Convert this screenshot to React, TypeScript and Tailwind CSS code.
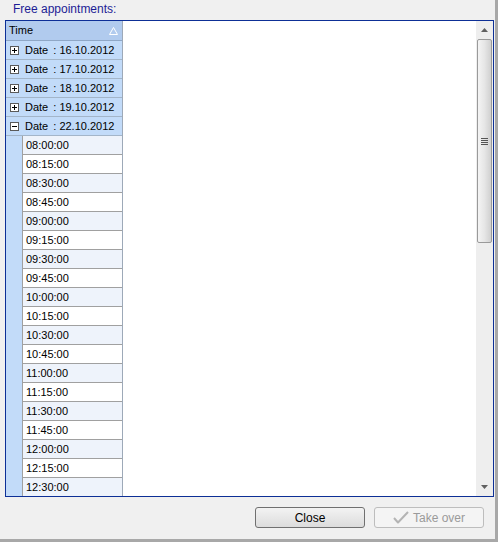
import React from 'react';

const dates = ['16.10.2012', '17.10.2012', '18.10.2012', '19.10.2012'];
const openDate = '22.10.2012';

const times = [
  '08:00:00', '08:15:00', '08:30:00', '08:45:00', '09:00:00', '09:15:00', '09:30:00',
  '09:45:00', '10:00:00', '10:15:00', '10:30:00', '10:45:00', '11:00:00', '11:15:00',
  '11:30:00', '11:45:00', '12:00:00', '12:15:00', '12:30:00',
];

const ExpandBox: React.FC<{ open?: boolean }> = ({ open }) => (
  <svg width="9" height="9" viewBox="0 0 9 9" className="shrink-0">
    <rect x="0.5" y="0.5" width="8" height="8" fill="#ffffff" stroke="#5a5a5a" />
    <line x1="2" y1="4.5" x2="7" y2="4.5" stroke="#000" />
    {!open && <line x1="4.5" y1="2" x2="4.5" y2="7" stroke="#000" />}
  </svg>
);

const GroupRow: React.FC<{ date: string; open?: boolean }> = ({ date, open }) => (
  <div className="h-[19px] shrink-0 flex items-center gap-[6px] pl-[4px] bg-[#c2dbf9] border-b border-[#a3b5c9]">
    <ExpandBox open={open} />
    <span className="whitespace-nowrap">
      Date<span className="ml-[5px]">: {date}</span>
    </span>
  </div>
);

const ScrollBar: React.FC = () => (
  <div className="w-[17px] h-full flex flex-col bg-[#eeeeee]">
    <div className="h-[18px] shrink-0 flex items-center justify-center">
      <svg width="7" height="4" viewBox="0 0 7 4">
        <polygon points="0,4 3.5,0 7,4" fill="#606060" />
      </svg>
    </div>
    <div className="mx-[1px] h-[204px] shrink-0 border border-[#9a9a9a] rounded-[2px] bg-gradient-to-r from-[#f4f4f4] via-[#e6e6e6] to-[#d0d0d0] flex items-center justify-center">
      <div className="flex flex-col gap-[1px]">
        <div className="w-[7px] h-[1px] bg-[#555]" />
        <div className="w-[7px] h-[1px] bg-[#555]" />
        <div className="w-[7px] h-[1px] bg-[#555]" />
        <div className="w-[7px] h-[1px] bg-[#555]" />
      </div>
    </div>
    <div className="flex-1" />
    <div className="h-[18px] shrink-0 flex items-center justify-center">
      <svg width="7" height="4" viewBox="0 0 7 4">
        <polygon points="0,0 3.5,4 7,0" fill="#606060" />
      </svg>
    </div>
  </div>
);

export default function App() {
  return (
    <div
      className="w-[498px] h-[542px] bg-[#f0f0f0] border-r-[3px] border-b-[3px] border-[#a8a8a8] flex flex-col text-[11px] text-black overflow-hidden"
      style={{ fontFamily: '"Liberation Sans", Arial, sans-serif' }}
    >
      <div className="h-[20px] shrink-0 pl-[13px] pt-[1px] text-[12px] text-[#1d1d95] leading-[16px]">
        Free appointments:
      </div>

      <div className="ml-[5px] w-[489px] h-[477px] shrink-0 border border-[#0d2f96] bg-white flex">
        {/* tree column */}
        <div className="w-[117px] h-full flex flex-col overflow-hidden border-r border-[#9da9b8] bg-[#c2dbf9]">
          <div className="h-[20px] shrink-0 flex items-center justify-between pl-[3px] pr-[4px] bg-[#b1cbee] border-b border-[#8fa7c6]">
            <span>Time</span>
            <svg width="9" height="8" viewBox="0 0 9 8">
              <polygon points="0.5,7.5 4.5,0.5 8.5,7.5" fill="none" stroke="#ffffff" />
            </svg>
          </div>
          {dates.map((d) => (
            <GroupRow key={d} date={d} />
          ))}
          <GroupRow date={openDate} open />
          <div className="flex flex-col pl-[16px]">
            {times.map((t, i) => (
              <div
                key={t}
                className={`h-[19px] shrink-0 flex items-center pl-[3px] border-l border-b border-[#a0a0a0] ${
                  i % 2 === 0 ? 'bg-[#eef3fb]' : 'bg-white'
                }`}
              >
                {t}
              </div>
            ))}
          </div>
        </div>
        <div className="flex-1" />
        <ScrollBar />
      </div>

      <div className="flex justify-end gap-[9px] pr-[11px] pt-[10px]">
        <button className="w-[110px] h-[21px] rounded-[3px] border border-[#707070] bg-gradient-to-b from-[#f3f3f3] to-[#dcdcdc] text-[12px]">
          Close
        </button>
        <button
          disabled
          className="w-[110px] h-[21px] rounded-[3px] border border-[#bdbdbd] bg-[#f4f4f4] text-[12px] text-[#9a9a9a] flex items-center justify-center gap-[4px]"
        >
          <svg width="16" height="13" viewBox="0 0 16 13">
            <path d="M1 7 L5 11.5 L15 1" fill="none" stroke="#b4b4b4" strokeWidth="2" strokeLinejoin="round" />
          </svg>
          Take over
        </button>
      </div>
    </div>
  );
}
